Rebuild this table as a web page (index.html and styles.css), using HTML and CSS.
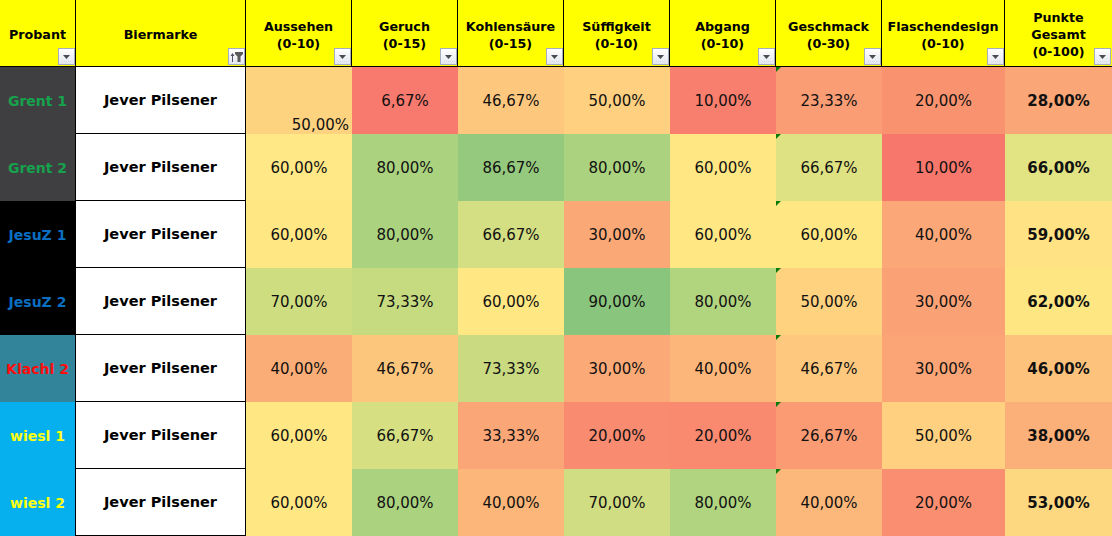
FILE: index.html
```html
<!DOCTYPE html>
<html lang="de">
<head>
<meta charset="utf-8">
<title>Bierverkostung</title>
<link rel="stylesheet" href="styles.css">
</head>
<body>
<div class="sheet">
  <div class="hcell">Probant<span class="fbtn"><svg viewBox="0 0 15 15" width="15" height="15"><polygon points="4,6 11,6 7.5,10" fill="#4a4a55"/><line x1="3" y1="12.5" x2="12" y2="12.5" stroke="#d8d8e8" stroke-dasharray="1 1"/></svg></span></div>
  <div class="hcell">Biermarke<span class="fbtn"><svg viewBox="0 0 15 15" width="15" height="15"><line x1="3.5" y1="5" x2="3.5" y2="13" stroke="#55506a" stroke-width="1"/><polygon points="1.5,7 3.5,4 5.5,7" fill="#55506a"/><polygon points="6,3 14,3 14,5 11.5,7.5 11.5,13 8.5,13 8.5,7.5 6,5" fill="#5a5a5a"/></svg></span></div>
  <div class="hcell">Aussehen<br>(0-10)<span class="fbtn"><svg viewBox="0 0 15 15" width="15" height="15"><polygon points="4,6 11,6 7.5,10" fill="#4a4a55"/><line x1="3" y1="12.5" x2="12" y2="12.5" stroke="#d8d8e8" stroke-dasharray="1 1"/></svg></span></div>
  <div class="hcell">Geruch<br>(0-15)<span class="fbtn"><svg viewBox="0 0 15 15" width="15" height="15"><polygon points="4,6 11,6 7.5,10" fill="#4a4a55"/><line x1="3" y1="12.5" x2="12" y2="12.5" stroke="#d8d8e8" stroke-dasharray="1 1"/></svg></span></div>
  <div class="hcell">Kohlensäure<br>(0-15)<span class="fbtn"><svg viewBox="0 0 15 15" width="15" height="15"><polygon points="4,6 11,6 7.5,10" fill="#4a4a55"/><line x1="3" y1="12.5" x2="12" y2="12.5" stroke="#d8d8e8" stroke-dasharray="1 1"/></svg></span></div>
  <div class="hcell">Süffigkeit<br>(0-10)<span class="fbtn"><svg viewBox="0 0 15 15" width="15" height="15"><polygon points="4,6 11,6 7.5,10" fill="#4a4a55"/><line x1="3" y1="12.5" x2="12" y2="12.5" stroke="#d8d8e8" stroke-dasharray="1 1"/></svg></span></div>
  <div class="hcell">Abgang<br>(0-10)<span class="fbtn"><svg viewBox="0 0 15 15" width="15" height="15"><polygon points="4,6 11,6 7.5,10" fill="#4a4a55"/><line x1="3" y1="12.5" x2="12" y2="12.5" stroke="#d8d8e8" stroke-dasharray="1 1"/></svg></span></div>
  <div class="hcell">Geschmack<br>(0-30)<span class="fbtn"><svg viewBox="0 0 15 15" width="15" height="15"><polygon points="4,6 11,6 7.5,10" fill="#4a4a55"/><line x1="3" y1="12.5" x2="12" y2="12.5" stroke="#d8d8e8" stroke-dasharray="1 1"/></svg></span></div>
  <div class="hcell">Flaschendesign<br>(0-10)<span class="fbtn"><svg viewBox="0 0 15 15" width="15" height="15"><polygon points="4,6 11,6 7.5,10" fill="#4a4a55"/><line x1="3" y1="12.5" x2="12" y2="12.5" stroke="#d8d8e8" stroke-dasharray="1 1"/></svg></span></div>
  <div class="hcell last">Punkte<br>Gesamt<br>(0-100)<span class="fbtn"><svg viewBox="0 0 15 15" width="15" height="15"><polygon points="4,6 11,6 7.5,10" fill="#4a4a55"/><line x1="3" y1="12.5" x2="12" y2="12.5" stroke="#d8d8e8" stroke-dasharray="1 1"/></svg></span></div>

  <!-- Row 1 -->
  <div class="name grent">Grent 1</div>
  <div class="beer">Jever Pilsener</div>
  <div class="val odd" style="background:#fed380">50,00%</div>
  <div class="val" style="background:#f8796d">6,67%</div>
  <div class="val" style="background:#fdc87e">46,67%</div>
  <div class="val" style="background:#fed080">50,00%</div>
  <div class="val" style="background:#f87e6e">10,00%</div>
  <div class="val flag" style="background:#fa9c74">23,33%</div>
  <div class="val" style="background:#f9936f">20,00%</div>
  <div class="val total" style="background:#fba676">28,00%</div>

  <!-- Row 2 -->
  <div class="name grent">Grent 2</div>
  <div class="beer">Jever Pilsener</div>
  <div class="val" style="background:#ffe885">60,00%</div>
  <div class="val" style="background:#abd37f">80,00%</div>
  <div class="val" style="background:#95c97d">86,67%</div>
  <div class="val" style="background:#abd37f">80,00%</div>
  <div class="val" style="background:#ffe784">60,00%</div>
  <div class="val flag" style="background:#dfe283">66,67%</div>
  <div class="val" style="background:#f8776c">10,00%</div>
  <div class="val total" style="background:#e2e383">66,00%</div>

  <!-- Row 3 -->
  <div class="name jesuz">JesuZ 1</div>
  <div class="beer">Jever Pilsener</div>
  <div class="val" style="background:#ffe784">60,00%</div>
  <div class="val" style="background:#abd37f">80,00%</div>
  <div class="val" style="background:#d4de82">66,67%</div>
  <div class="val" style="background:#fba877">30,00%</div>
  <div class="val" style="background:#ffe784">60,00%</div>
  <div class="val flag" style="background:#ffe784">60,00%</div>
  <div class="val" style="background:#fba777">40,00%</div>
  <div class="val total" style="background:#ffe283">59,00%</div>

  <!-- Row 4 -->
  <div class="name jesuz">JesuZ 2</div>
  <div class="beer">Jever Pilsener</div>
  <div class="val" style="background:#cfdd81">70,00%</div>
  <div class="val" style="background:#c6da80">73,33%</div>
  <div class="val" style="background:#ffe784">60,00%</div>
  <div class="val" style="background:#89c57c">90,00%</div>
  <div class="val" style="background:#b1d47f">80,00%</div>
  <div class="val flag" style="background:#fed27f">50,00%</div>
  <div class="val" style="background:#faa275">30,00%</div>
  <div class="val total" style="background:#fee683">62,00%</div>

  <!-- Row 5 -->
  <div class="name klachl">Klachl 2</div>
  <div class="beer">Jever Pilsener</div>
  <div class="val" style="background:#fbad77">40,00%</div>
  <div class="val" style="background:#fdc67d">46,67%</div>
  <div class="val" style="background:#c9da80">73,33%</div>
  <div class="val" style="background:#fbaa77">30,00%</div>
  <div class="val" style="background:#fcb679">40,00%</div>
  <div class="val flag" style="background:#fec97e">46,67%</div>
  <div class="val" style="background:#fba576">30,00%</div>
  <div class="val total" style="background:#fdc27c">46,00%</div>

  <!-- Row 6 -->
  <div class="name wiesl">wiesl 1</div>
  <div class="beer">Jever Pilsener</div>
  <div class="val" style="background:#ffe784">60,00%</div>
  <div class="val" style="background:#d6df82">66,67%</div>
  <div class="val" style="background:#fba676">33,33%</div>
  <div class="val" style="background:#f98b70">20,00%</div>
  <div class="val" style="background:#f98a70">20,00%</div>
  <div class="val flag" style="background:#fa9b73">26,67%</div>
  <div class="val" style="background:#fed07f">50,00%</div>
  <div class="val total" style="background:#fcb079">38,00%</div>

  <!-- Row 7 -->
  <div class="name wiesl">wiesl 2</div>
  <div class="beer">Jever Pilsener</div>
  <div class="val" style="background:#ffe784">60,00%</div>
  <div class="val" style="background:#abd37f">80,00%</div>
  <div class="val" style="background:#fcb679">40,00%</div>
  <div class="val" style="background:#d0dd82">70,00%</div>
  <div class="val" style="background:#b0d47f">80,00%</div>
  <div class="val flag" style="background:#fcb87a">40,00%</div>
  <div class="val" style="background:#f98f70">20,00%</div>
  <div class="val total" style="background:#fed880">53,00%</div>
</div>
</body>
</html>
```

FILE: styles.css
```css
* {
  box-sizing: border-box;
}

html, body {
  margin: 0;
  padding: 0;
  background: #ffffff;
  overflow: hidden;
}

.sheet {
  display: grid;
  grid-template-columns: 76px 170px repeat(6, 106px) 123px 107px;
  grid-auto-rows: 67px;
  width: 1112px;
  font-family: "DejaVu Sans", Verdana, sans-serif;
  color: #111111;
}

.hcell {
  position: relative;
  display: flex;
  align-items: center;
  justify-content: center;
  text-align: center;
  background: #ffff00;
  border-right: 1px solid #000000;
  border-bottom: 1px solid #000000;
  font-size: 12.7px;
  font-weight: bold;
  line-height: 17px;
  color: #000000;
  padding-top: 3px;
}

.hcell.last {
  border-right: none;
}

.fbtn {
  position: absolute;
  right: 0;
  bottom: 1px;
  width: 17px;
  height: 17px;
  border: 1px solid #a5adbf;
  background: linear-gradient(#ffffff, #e4e6ee);
  display: flex;
  align-items: center;
  justify-content: center;
}

.hcell.last .fbtn {
  right: 1px;
}

.fbtn svg {
  display: block;
}

.name {
  display: flex;
  align-items: center;
  justify-content: center;
  border-right: 1px solid #000000;
  font-size: 14px;
  font-weight: bold;
}

.grent {
  background: #3f3f42;
  color: #16a24d;
}

.jesuz {
  background: #000000;
  color: #0a6fc2;
}

.klachl {
  background: #31849a;
  color: #ff0d0d;
}

.wiesl {
  background: #06b0ee;
  color: #ffff10;
}

.beer {
  display: flex;
  align-items: center;
  justify-content: center;
  background: #ffffff;
  border-right: 1px solid #000000;
  border-bottom: 1px solid #000000;
  font-size: 14.5px;
  font-weight: bold;
  color: #000000;
}

.val {
  position: relative;
  display: flex;
  align-items: center;
  justify-content: center;
  font-size: 15px;
  line-height: 18px;
}

.val.odd {
  align-items: flex-end;
  justify-content: flex-end;
  padding-right: 3px;
}

.val.total {
  font-weight: bold;
}

.val.flag::before {
  content: "";
  position: absolute;
  left: 0;
  top: 0;
  width: 0;
  height: 0;
  border-top: 5px solid #0a7a0a;
  border-right: 5px solid transparent;
}
```
